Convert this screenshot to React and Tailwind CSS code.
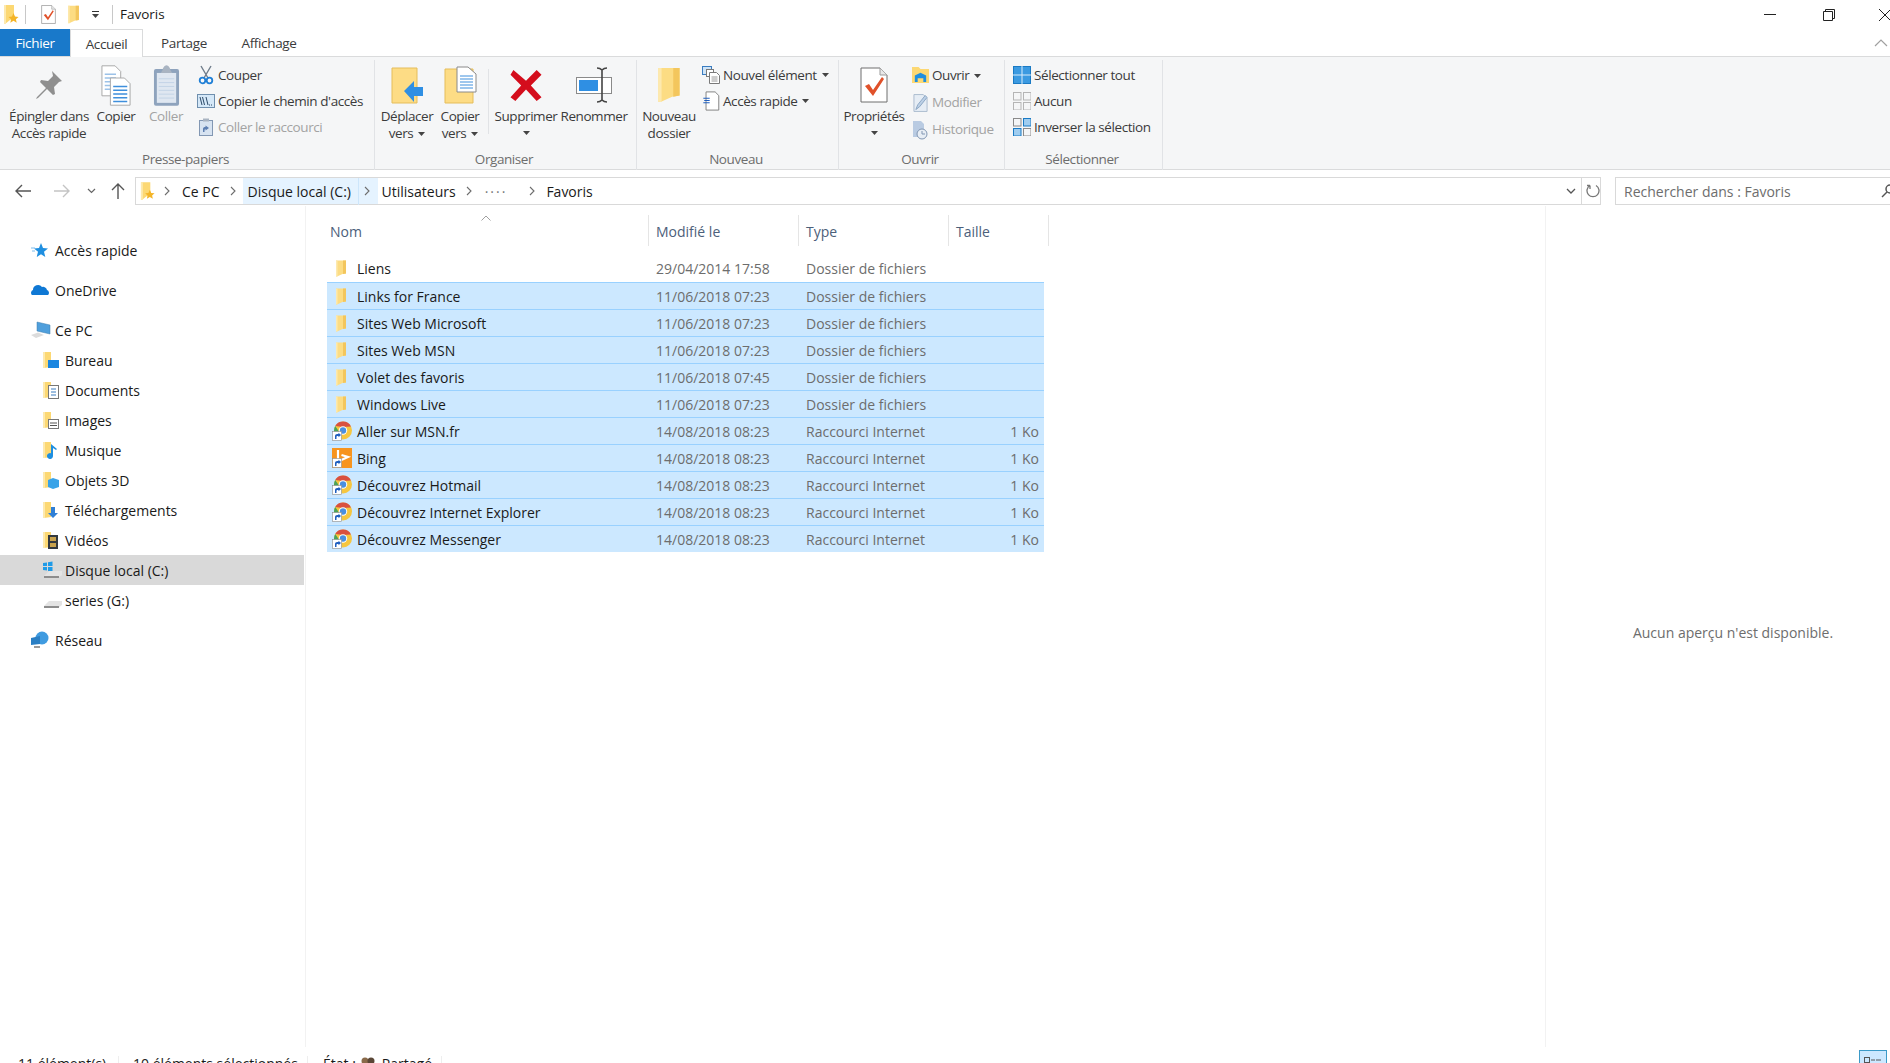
import React from 'react';

// --- icons ---
const Folder = ({ className = 'w-[12px] h-[17px]' }) => (
    <svg viewBox="0 0 24 34" className={className}>
        <path d="M2 1h20v26l-7 1-11 5H2z" fill="#fcdc83" />
        <path d="M16 1h6v26l-6 1z" fill="#f3c65d" />
        <path d="M2 1h3v32H3l-1-1z" fill="#fde9ae" />
    </svg>
);

const Shortcut = () => (
    <g>
        <rect x="0.5" y="10.5" width="9" height="9" fill="#fff" stroke="#8a8a8a" strokeWidth="0.6" />
        <path d="M3 18v-3c0-1.3 1-2 2.2-2H6.5V11.8L9 14l-2.500 2.200V15H5.500C4.800 15 4.500 15.500 4.500 16.200V18z" fill="#1f5fbf" />
    </g>
);

const ChromeLink = () => (
    <svg viewBox="0 0 20 20" className="w-[20px] h-[20px] shrink-0">
        <circle cx="11" cy="9.500" r="9" fill="#f6c63f" />
        <path d="M3.200 5A9 9 0 0 1 19 5.500L11 6z" fill="#d9503f" />
        <path d="M2 9.500A9 9 0 0 1 3.200 5L8 12l-1 6A9 9 0 0 1 2 9.500z" fill="#4aa35a" />
        <circle cx="11" cy="9.500" r="4.200" fill="#fff" />
        <circle cx="11" cy="9.500" r="3.200" fill="#4a8fe0" />
        <Shortcut />
    </svg>
);

const BingLink = () => (
    <svg viewBox="0 0 20 20" className="w-[20px] h-[20px] shrink-0">
        <rect x="0" y="0" width="20" height="20" fill="#f7941e" />
        <path d="M6 2v11.500l10-4.500-6.500-2" fill="none" stroke="#fff" strokeWidth="2.200" />
        <Shortcut />
    </svg>
);

const Caret = ({ className = '' }) => (
    <svg viewBox="0 0 7 4" className={`w-[7px] h-[4px] ${className}`}>
        <path d="M0 0h7L3.500 4z" fill="#444" />
    </svg>
);

const Chevron = ({ className = '' }) => (
    <svg viewBox="0 0 6 10" className={`w-[6px] h-[10px] shrink-0 ${className}`} fill="none" stroke="#6d6d6d" strokeWidth="1.100">
        <path d="M1 1l4 4-4 4" />
    </svg>
);

const StarFolder = ({ className }) => (
    <svg viewBox="0 0 16 20" className={className}>
        <path d="M1 0h10v14l-4 1-5 4H1z" fill="#fcd873" />
        <path d="M1 0h2v19H1z" fill="#fde9ae" />
        <path d="M10.500 8l1.500 3.500 3.500.4-2.600 2.300.8 3.500-3.200-1.900-3.200 1.900.8-3.500-2.600-2.300 3.500-.4z" fill="#f4b528" />
    </svg>
);

const PropsDoc = ({ className }) => (
    <svg viewBox="0 0 28 36" className={className}>
        <path d="M1 1h19l7 7v27H1z" fill="#fff" stroke="#6f6f6f" />
        <path d="M20 1v7h7" fill="#e8e8e8" stroke="#9a9a9a" />
        <path d="M5 19l4-2 4 6 9-13 2 2-11 17z" fill="#e0512a" />
    </svg>
);

const Pin = () => (
    <svg viewBox="0 0 28 30" className="w-[28px] h-[30px]">
        <path d="M17 1l10 10-3 1-5 5 1 7-2 1-6-6-9 9-2 1 1-2 9-9-6-6 1-2 7 1 5-5z" fill="#8f8f8f" />
    </svg>
);

const CopyDocs = () => (
    <svg viewBox="0 0 32 44" className="w-[30px] h-[43px]">
        <path d="M1 1h14l6 6v26H1z" fill="#fff" stroke="#a5a5a5" />
        <path d="M4 10h12M4 14h12M4 18h12M4 22h12M4 26h12" stroke="#9cc2e8" strokeWidth="1.500" />
        <path d="M10 14h15l6 6v23H10z" fill="#fff" stroke="#a5a5a5" />
        <path d="M13 23h15M13 27h15M13 31h15M13 35h15M13 39h15" stroke="#3f8fdc" strokeWidth="1.500" />
    </svg>
);

const Clipboard = () => (
    <svg viewBox="0 0 28 44" className="w-[27px] h-[43px]">
        <rect x="1" y="5" width="26" height="38" rx="2" fill="#8ea3bd" />
        <rect x="4" y="9" width="20" height="31" fill="#dfe7f1" />
        <path d="M6 15h16M6 19h16M6 23h16M6 27h16M6 31h16M6 35h16" stroke="#c3d3e6" />
        <path d="M10 6c0-2 2-5 4-5s4 3 4 5l2 3H8z" fill="#a9b4c2" />
    </svg>
);

const Scissors = () => (
    <svg viewBox="0 0 16 20" className="w-[16px] h-[20px]" fill="none">
        <path d="M3 1l7 12M13 1L6 13" stroke="#6f7c8a" strokeWidth="1.400" />
        <circle cx="4.500" cy="15.500" r="2.800" stroke="#1f7fd6" strokeWidth="1.800" />
        <circle cx="11.500" cy="15.500" r="2.800" stroke="#1f7fd6" strokeWidth="1.800" />
    </svg>
);

const PathIcon = () => (
    <svg viewBox="0 0 18 14" className="w-[18px] h-[14px]" fill="none">
        <rect x="0.500" y="0.500" width="17" height="13" fill="#d5e8f8" stroke="#6f8fae" />
        <path d="M3 3l2 8M5.500 3l2 8M9 3l2 8" stroke="#2c4a68" />
        <path d="M12 11h1M14 11h1" stroke="#2c4a68" />
    </svg>
);

const PasteLink = () => (
    <svg viewBox="0 0 14 18" className="w-[14px] h-[18px]">
        <rect x="0.500" y="2.500" width="13" height="15" fill="#d7e3f1" stroke="#8297b3" />
        <rect x="4" y="0.500" width="6" height="3" fill="#a9b4c2" />
        <path d="M4 14v-3c0-1.500 1-2 2.500-2V7.500L10 10l-3.500 2.500V11C5.500 11 5.500 12 5.500 14z" fill="#5d7fb2" />
    </svg>
);

const MoveFolder = () => (
    <svg viewBox="0 0 32 37" className="w-[32px] h-[37px]">
        <path d="M1 1h25v35H1z" fill="#fddc85" stroke="#e5bd5b" />
        <path d="M13 24l10-10v6h9v9h-9v6z" fill="#2f8fe3" />
    </svg>
);

const CopyFolder = () => (
    <svg viewBox="0 0 33 38" className="w-[33px] h-[38px]">
        <path d="M1 3h28v34H1z" fill="#fddc85" stroke="#e5bd5b" />
        <path d="M13 1h11l8 7v18H13z" fill="#fff" stroke="#8a8a8a" />
        <path d="M16 10h13M16 13h13M16 16h13M16 19h13M16 22h13" stroke="#3f8fdc" />
    </svg>
);

const DeleteX = () => (
    <svg viewBox="0 0 32 32" className="w-[32px] h-[31px]">
        <path d="M3 0l13 11L27 0l5 5-11 11 11 12-5 4-11-12L5 32l-5-4 11-12L0 5z" fill="#d40d1c" />
    </svg>
);

const RenameIcon = () => (
    <svg viewBox="0 0 37 36" className="w-[37px] h-[36px]" fill="none">
        <rect x="0.500" y="10.500" width="35" height="16" fill="#fff" stroke="#8a8a8a" />
        <rect x="3" y="13" width="19" height="11" fill="#2f8fe3" />
        <path d="M21 1c3 0 4 1 5 2 1-1 2-2 5-2M26 3v30M21 35c3 0 4-1 5-2 1 1 2 2 5 2" stroke="#444" strokeWidth="1.600" />
    </svg>
);

const NewItem = () => (
    <svg viewBox="0 0 18 18" className="w-[18px] h-[18px]">
        <rect x="0.500" y="0.500" width="9" height="8" fill="#cfe4f7" stroke="#3a7cc0" />
        <rect x="4.500" y="3.500" width="7" height="7" fill="#fff" stroke="#7a7a7a" />
        <path d="M7.500 6.500h7l3 3v8h-10z" fill="#fff" stroke="#7a7a7a" />
        <path d="M9.500 11h6M9.500 13h6M9.500 15h6" stroke="#9a9a9a" />
    </svg>
);

const QuickAccess = () => (
    <svg viewBox="0 0 18 22" className="w-[17px] h-[20px]">
        <path d="M3 1h10l4 4v16H3z" fill="#fff" stroke="#7a7a7a" />
        <path d="M0 8h7M1 10.500h6M0 13h7" stroke="#1f5fbf" strokeWidth="1.200" />
    </svg>
);

const OpenIcon = () => (
    <svg viewBox="0 0 18 20" className="w-[17px] h-[19px]">
        <path d="M0 1h7l2 2h9v15H0z" fill="#fcd873" />
        <path d="M3 17V10l6-3 6 3v7h-3v-4H6v4z" fill="#1f8fe0" />
    </svg>
);

const EditIcon = () => (
    <svg viewBox="0 0 16 20" className="w-[15px] h-[20px]" fill="none">
        <path d="M1 1h10l4 4v14H1z" fill="#e6edf5" stroke="#a9bacd" />
        <path d="M3 17l2-5 8-10 2 2-8 10z" fill="#bcd0e6" stroke="#8aa4c2" />
    </svg>
);

const HistoryIcon = () => (
    <svg viewBox="0 0 16 20" className="w-[16px] h-[20px]" fill="none">
        <path d="M1 1h8l3 3v13H1z" fill="#b9cbe2" />
        <circle cx="10" cy="14" r="5" fill="#e8eef5" stroke="#8297b3" />
        <path d="M10 11v3h3" stroke="#8297b3" />
    </svg>
);

const Grid4 = ({ cells, border }) => (
    <svg viewBox="0 0 18 18" className="w-[18px] h-[18px]">
        {[[0, 0], [10, 0], [0, 10], [10, 10]].map(([x, y], i) => (
            <rect key={i} x={x + 0.5} y={y + 0.5} width="7.500" height="7.500" fill={cells[i]} stroke={border[i]} />
        ))}
    </svg>
);

const SelectAll = () => (
    <svg viewBox="0 0 18 18" className="w-[18px] h-[18px]">
        <rect x="0.500" y="0.500" width="17" height="17" fill="#3b9ae1" stroke="#1a7ac4" />
        <path d="M9 0v18M0 9h18" stroke="#d8ecfb" />
    </svg>
);

const PcIcon = () => (
    <svg viewBox="0 0 20 18" className="w-[20px] h-[18px]">
        <path d="M6 1l13 3v9L6 10z" fill="#4f9fdc" stroke="#3f7faf" strokeWidth="0.500" />
        <path d="M0 14l7-2.500 6 2.500-8 3z" fill="#dcdcdc" />
    </svg>
);

const LibFolder = ({ children }) => (
    <svg viewBox="0 0 16 17" className="w-[16px] h-[17px]">
        <path d="M0 0h8v15l-7 1H0z" fill="#fcd873" />
        <path d="M0 0h2v16H0z" fill="#fde9ae" />
        {children}
    </svg>
);

const DriveIcon = ({ windows }) => (
    <svg viewBox="0 0 20 18" className="w-[20px] h-[18px]">
        {windows && <path d="M0 2l4-.6V5H0zM5 1.300L9.500.500V5H5zM0 6h4v3.500L0 9zM5 6h4.500v4.500L5 10z" fill="#1f9be8" />}
        <path d="M1 15l5-5h13v4l-4 3H2z" fill="#e4e4e4" />
        <path d="M1 15h15v2H1z" fill="#8d8d8d" />
    </svg>
);

const BackArrow = ({ color, flip }) => (
    <svg viewBox="0 0 16 14" className={`w-[16px] h-[14px] ${flip ? 'rotate-180' : ''}`} fill="none" stroke={color} strokeWidth="1.400">
        <path d="M1 7h15M7 1L1 7l6 6" />
    </svg>
);

// --- ribbon parts ---
const LargeBtn = ({ w, icon, lines, disabled, caret, lineCaret }) => (
    <div className={`${w} flex flex-col items-center text-center ${disabled ? 'text-[#a3a3a3]' : 'text-[#3b3b3b]'}`}>
        <div className="h-[46px] mt-[2px] flex items-center justify-center">{icon}</div>
        <div className="leading-[17px] whitespace-nowrap">{lines[0]}</div>
        {lines[1] && (
            <div className="leading-[17px] whitespace-nowrap flex items-center gap-[5px]">
                {lines[1]}
                {lineCaret && <Caret />}
            </div>
        )}
        {caret && <Caret className="mt-[6px]" />}
    </div>
);

const SmallBtn = ({ icon, label, disabled, caret, h = 'h-[26px]' }) => (
    <div className={`${h} flex items-center gap-[3px] whitespace-nowrap ${disabled ? 'text-[#a3a3a3]' : 'text-[#3b3b3b]'}`}>
        <div className="w-[18px] flex items-center justify-center shrink-0">{icon}</div>
        {label}
        {caret && <Caret className="ml-[2px]" />}
    </div>
);

const Group = ({ w, label, children }) => (
    <div className={`${w} shrink-0 h-[110px] mt-[3px] border-r border-[#e1e3e6] flex flex-col`}>
        <div className="flex-1 flex">{children}</div>
        <div className="text-center text-[#6d6d6d] leading-[18px] mb-[2px] pr-[3px]">{label}</div>
    </div>
);

// --- data ---
const files = [
    { name: 'Liens', date: '29/04/2014 17:58', type: 'Dossier de fichiers', icon: 'folder' },
    { name: 'Links for France', date: '11/06/2018 07:23', type: 'Dossier de fichiers', icon: 'folder', sel: true },
    { name: 'Sites Web Microsoft', date: '11/06/2018 07:23', type: 'Dossier de fichiers', icon: 'folder', sel: true },
    { name: 'Sites Web MSN', date: '11/06/2018 07:23', type: 'Dossier de fichiers', icon: 'folder', sel: true },
    { name: 'Volet des favoris', date: '11/06/2018 07:45', type: 'Dossier de fichiers', icon: 'folder', sel: true },
    { name: 'Windows Live', date: '11/06/2018 07:23', type: 'Dossier de fichiers', icon: 'folder', sel: true },
    { name: 'Aller sur MSN.fr', date: '14/08/2018 08:23', type: 'Raccourci Internet', size: '1 Ko', icon: 'link', sel: true },
    { name: 'Bing', date: '14/08/2018 08:23', type: 'Raccourci Internet', size: '1 Ko', icon: 'bing', sel: true },
    { name: 'Découvrez Hotmail', date: '14/08/2018 08:23', type: 'Raccourci Internet', size: '1 Ko', icon: 'link', sel: true },
    { name: 'Découvrez Internet Explorer', date: '14/08/2018 08:23', type: 'Raccourci Internet', size: '1 Ko', icon: 'link', sel: true },
    { name: 'Découvrez Messenger', date: '14/08/2018 08:23', type: 'Raccourci Internet', size: '1 Ko', icon: 'link', sel: true },
];

const libraries = [
    { label: 'Bureau', badge: <rect x="5" y="8" width="11" height="8" fill="#1a86e0" /> },
    { label: 'Documents', badge: <g><rect x="5.500" y="3.500" width="10" height="13" fill="#fff" stroke="#777" /><path d="M8 7h5M8 10h5M8 13h5" stroke="#3a7cc0" /></g> },
    { label: 'Images', badge: <g><rect x="5.500" y="7.500" width="10" height="9" fill="#fff" stroke="#777" /><path d="M7 11h7M7 13.500h7" stroke="#555" /></g> },
    { label: 'Musique', badge: <path d="M8 2l6 5-1 1-3-2v8a3 3 0 1 1-2-2.800z" fill="#1f8fe0" /> },
    { label: 'Objets 3D', badge: <path d="M5 8l5-2 6 2v7l-6 2-5-2z" fill="#38a3e8" /> },
    { label: 'Téléchargements', badge: <path d="M8 5h4v6h3l-5 5-5-5h3z" fill="#2f7fd6" /> },
    { label: 'Vidéos', badge: <g><rect x="5" y="3" width="10" height="14" fill="#33393f" /><path d="M7 5h6v4H7zM7 11h6v4H7z" fill="#c8a24d" /></g> },
];

const NavRow = ({ icon, label, child, active }) => (
    <div className={`h-[30px] w-[304px] flex items-center whitespace-nowrap text-[#1a1a1a] ${active ? 'bg-[#d9d9d9]' : ''} ${child ? 'pl-[43px]' : 'pl-[31px]'}`}>
        <div className={`${child ? 'w-[22px]' : 'w-[24px]'} flex items-center shrink-0`}>{icon}</div>
        {label}
    </div>
);

const App = () => {
    return (
        <div className="h-screen w-full overflow-hidden bg-white">
            <div className="w-[1920px] h-[1080px] flex flex-col font-['Open_Sans',sans-serif] text-[14px]">
                {/* title bar */}
                <div className="h-[29px] shrink-0 flex items-center">
                    <div className="w-[26px] pl-[3px] flex items-center border-r border-[#c8c8c8] h-[19px]">
                        <StarFolder className="w-[16px] h-[20px]" />
                    </div>
                    <div className="ml-[15px] flex items-center">
                        <PropsDoc className="w-[15px] h-[19px]" />
                        <Folder className="w-[13px] h-[19px] ml-[11px]" />
                        <div className="ml-[12px] flex flex-col items-center gap-[2px]">
                            <div className="w-[7px] h-px bg-[#333]" />
                            <Caret />
                        </div>
                    </div>
                    <div className="ml-[13px] h-[19px] border-l border-[#c8c8c8] pl-[7px] leading-[19px] text-[13.5px] text-[#1a1a1a]">Favoris</div>
                    <div className="flex-1" />
                    <div className="w-[12px] h-px bg-[#222] mr-[47px]" />
                    <svg viewBox="0 0 12 12" className="w-[12px] h-[12px] mr-[44px]" fill="none" stroke="#222">
                        <path d="M.5 2.500h9v9h-9zM2.500 2.500v-2h9v9h-2" />
                    </svg>
                    <svg viewBox="0 0 12 12" className="w-[12px] h-[12px] mr-[29px]" fill="none" stroke="#222">
                        <path d="M0 0l12 12M12 0L0 12" />
                    </svg>
                </div>

                {/* tabs */}
                <div className="h-[28px] shrink-0 flex items-stretch border-b border-[#dadbdc] text-[13.5px] tracking-[-0.35px]">
                    <div className="w-[70px] bg-[#1979ca] text-white flex items-center justify-center pt-[2px]">Fichier</div>
                    <div className="w-[73px] bg-white border-x border-t border-[#dadbdc] -mb-px flex items-center justify-center pt-[1px] text-[#3b3b3b]">Accueil</div>
                    <div className="w-[82px] flex items-center justify-center pt-[2px] text-[#3b3b3b]">Partage</div>
                    <div className="w-[86px] flex items-center justify-center pt-[2px] pl-[2px] text-[#3b3b3b]">Affichage</div>
                    <div className="flex-1" />
                    <svg viewBox="0 0 14 8" className="w-[14px] h-[8px] self-center mr-[32px]" fill="none" stroke="#a0a0a0" strokeWidth="1.200">
                        <path d="M1 7l6-6 6 6" />
                    </svg>
                </div>

                {/* ribbon */}
                <div className="h-[113px] shrink-0 bg-[#f5f6f7] border-b border-[#dadbdc] flex text-[13.5px] tracking-[-0.42px]">
                    <Group w="w-[375px]" label="Presse-papiers">
                        <div className="w-[4px]" />
                        <LargeBtn w="w-[90px]" icon={<Pin />} lines={['Épingler dans', 'Accès rapide']} />
                        <LargeBtn w="w-[44px]" icon={<CopyDocs />} lines={['Copier']} />
                        <LargeBtn w="w-[56px]" icon={<Clipboard />} lines={['Coller']} disabled />
                        <div className="pl-[3px] pt-[2px]">
                            <SmallBtn icon={<Scissors />} label="Couper" />
                            <SmallBtn icon={<PathIcon />} label="Copier le chemin d'accès" />
                            <SmallBtn icon={<PasteLink />} label="Coller le raccourci" disabled />
                        </div>
                    </Group>
                    <Group w="w-[262px]" label="Organiser">
                        <div className="w-[4px]" />
                        <LargeBtn w="w-[56px]" icon={<MoveFolder />} lines={['Déplacer', 'vers']} lineCaret />
                        <LargeBtn w="w-[50px]" icon={<CopyFolder />} lines={['Copier', 'vers']} lineCaret />
                        <div className="w-px h-[65px] mt-[9px] bg-[#e1e3e6] mx-[3px]" />
                        <LargeBtn w="w-[68px]" icon={<DeleteX />} lines={['Supprimer']} caret />
                        <LargeBtn w="w-[68px]" icon={<RenameIcon />} lines={['Renommer']} />
                    </Group>
                    <Group w="w-[202px]" label="Nouveau">
                        <div className="w-[2px]" />
                        <LargeBtn w="w-[60px]" icon={<Folder className="w-[26px] h-[36px]" />} lines={['Nouveau', 'dossier']} />
                        <div className="pl-[3px] pt-[2px]">
                            <SmallBtn icon={<NewItem />} label="Nouvel élément" caret />
                            <SmallBtn icon={<QuickAccess />} label="Accès rapide" caret />
                        </div>
                    </Group>
                    <Group w="w-[166px]" label="Ouvrir">
                        <div className="w-[3px]" />
                        <LargeBtn w="w-[64px]" icon={<PropsDoc className="w-[28px] h-[36px]" />} lines={['Propriétés']} caret />
                        <div className="pl-[5px] pt-[2px]">
                            <SmallBtn h="h-[27px]" icon={<OpenIcon />} label="Ouvrir" caret />
                            <SmallBtn h="h-[27px]" icon={<EditIcon />} label="Modifier" disabled />
                            <SmallBtn h="h-[27px]" icon={<HistoryIcon />} label="Historique" disabled />
                        </div>
                    </Group>
                    <Group w="w-[158px]" label="Sélectionner">
                        <div className="pl-[8px] pt-[2px]">
                            <SmallBtn icon={<SelectAll />} label="Sélectionner tout" />
                            <SmallBtn icon={<Grid4 cells={['#f5f6f7', '#f5f6f7', '#f5f6f7', '#f5f6f7']} border={['#b5b5b5', '#b5b5b5', '#b5b5b5', '#b5b5b5']} />} label="Aucun" />
                            <SmallBtn icon={<Grid4 cells={['#f5f6f7', '#9fcdf0', '#9fcdf0', '#f5f6f7']} border={['#8a8a8a', '#1a7ac4', '#1a7ac4', '#8a8a8a']} />} label="Inverser la sélection" />
                        </div>
                    </Group>
                </div>

                {/* address bar */}
                <div className="h-[28px] shrink-0 mt-[7px] flex items-center">
                    <div className="w-[135px] shrink-0 flex items-center pl-[15px]">
                        <BackArrow color="#555" />
                        <div className="ml-[23px]"><BackArrow color="#c4c4c4" flip /></div>
                        <svg viewBox="0 0 9 6" className="w-[9px] h-[6px] ml-[17px]" fill="none" stroke="#666" strokeWidth="1.200"><path d="M1 1l3.500 3.500L8 1" /></svg>
                        <svg viewBox="0 0 14 16" className="w-[14px] h-[16px] ml-[15px]" fill="none" stroke="#555" strokeWidth="1.400"><path d="M7 16V1M1 7l6-6 6 6" /></svg>
                    </div>
                    <div className="w-[1466px] h-full shrink-0 border border-[#d9d9d9] flex items-center text-[#1a1a1a]">
                        <div className="ml-[4px] flex items-center"><StarFolder className="w-[15px] h-[19px]" /></div>
                        <Chevron className="ml-[9px]" />
                        <span className="ml-[12px] pt-px">Ce PC</span>
                        <Chevron className="ml-[10px]" />
                        <div className="ml-[7px] h-full bg-[#e5f3ff] flex items-center w-[135px] pl-[5px] shrink-0">
                            <span className="w-[111px] border-r border-[#cde6fb] leading-[26px] shrink-0 pt-px">Disque local (C:)</span>
                            <Chevron className="ml-[5px]" />
                        </div>
                        <span className="ml-[4px] pt-px">Utilisateurs</span>
                        <Chevron className="ml-[10px]" />
                        <span className="ml-[13px] text-[#777] tracking-[2px]">····</span>
                        <Chevron className="ml-[22px]" />
                        <span className="ml-[11px] pt-px">Favoris</span>
                        <div className="flex-1" />
                        <svg viewBox="0 0 10 6" className="w-[10px] h-[6px] mr-[5px]" fill="none" stroke="#555" strokeWidth="1.300"><path d="M1 1l4 4 4-4" /></svg>
                        <div className="w-px h-full bg-[#d9d9d9]" />
                        <svg viewBox="0 0 14 14" className="w-[14px] h-[14px] ml-[4px]" fill="none" stroke="#777" strokeWidth="1.300"><path d="M4 1.500A6 6 0 1 0 10 1.500M4 1.500V5M4 1.500H1" /></svg>
                    </div>
                    <div className="ml-[14px] flex-1 h-full border border-[#d9d9d9] flex items-center pl-[8px] text-[#6d6d6d]">
                        <span className="pt-px">Rechercher dans : Favoris</span>
                        <div className="flex-1" />
                        <svg viewBox="0 0 14 14" className="w-[14px] h-[14px] mr-[24px]" fill="none" stroke="#555" strokeWidth="1.500"><circle cx="9" cy="5" r="4" /><path d="M6 8l-5 5" /></svg>
                    </div>
                </div>

                {/* main */}
                <div className="flex-1 flex min-h-0 mt-px">
                    <div className="w-[306px] shrink-0 border-r border-[#f2f2f2] pt-[29px]">
                        <NavRow label="Accès rapide" icon={
                            <svg viewBox="0 0 17 15" className="w-[17px] h-[15px]"><path d="M10 0l2 5 5 .4-4 3.400 1.300 5.200L10 11.300 5.700 14 7 8.800 3 5.400 8 5z" fill="#1f8fe0" /><path d="M0 5h4M1 8h3" stroke="#7dbcec" /></svg>
                        } />
                        <div className="h-[10px]" />
                        <NavRow label="OneDrive" icon={
                            <svg viewBox="0 0 18 12" className="w-[18px] h-[12px]"><path d="M1 11a3 3 0 0 1 1-5 5 5 0 0 1 9-3 4 4 0 0 1 5 3 3 3 0 0 1 1 5z" fill="#0f78d4" /></svg>
                        } />
                        <div className="h-[10px]" />
                        <NavRow label="Ce PC" icon={<PcIcon />} />
                        {libraries.map((l) => (
                            <NavRow key={l.label} child label={l.label} icon={<LibFolder>{l.badge}</LibFolder>} />
                        ))}
                        <NavRow child active label="Disque local (C:)" icon={<DriveIcon windows />} />
                        <NavRow child label="series (G:)" icon={<DriveIcon />} />
                        <div className="h-[10px]" />
                        <NavRow label="Réseau" icon={
                            <svg viewBox="0 0 18 18" className="w-[18px] h-[18px]"><circle cx="11" cy="7" r="6.500" fill="#3f9be0" /><path d="M0 7l9-2v8l-9 1z" fill="#2a7fc4" /><path d="M3 15h6v2H3z" fill="#9a9a9a" /></svg>
                        } />
                    </div>

                    <div className="w-[1239px] shrink-0 pl-[21px] pt-[9px]">
                        <div className="h-[31px] flex text-[#4c607a] relative">
                            <div className="w-[322px] border-r border-[#e5e5e5] pl-[3px] pt-px flex items-center">Nom</div>
                            <div className="w-[150px] border-r border-[#e5e5e5] pl-[7px] pt-px flex items-center">Modifié le</div>
                            <div className="w-[150px] border-r border-[#e5e5e5] pl-[7px] pt-px flex items-center">Type</div>
                            <div className="w-[100px] border-r border-[#e5e5e5] pl-[7px] pt-px flex items-center">Taille</div>
                            <svg viewBox="0 0 10 6" className="w-[10px] h-[6px] absolute left-[154px] top-0" fill="none" stroke="#a0a0a0"><path d="M.5 5.500L5 1l4.500 4.500" /></svg>
                        </div>
                        <div className="mt-[9px] w-[717px]">
                            {files.map((f) => (
                                <div key={f.name} className={`h-[27px] flex items-center ${f.sel ? 'bg-[#cce8ff] border-t border-[#99d1ff]' : ''}`}>
                                    <div className="w-[329px] shrink-0 flex items-center">
                                        <div className="w-[30px] pl-[5px] flex items-center shrink-0">
                                            {f.icon === 'folder' && <div className="pl-[3px]"><Folder /></div>}
                                            {f.icon === 'link' && <ChromeLink />}
                                            {f.icon === 'bing' && <BingLink />}
                                        </div>
                                        <span className="text-[#1a1a1a]">{f.name}</span>
                                    </div>
                                    <div className="w-[150px] shrink-0 text-[#6d6d6d]">{f.date}</div>
                                    <div className="flex-1 text-[#6d6d6d]">{f.type}</div>
                                    <div className="pr-[5px] text-[#6d6d6d]">{f.size}</div>
                                </div>
                            ))}
                        </div>
                    </div>

                    <div className="flex-1 border-l border-[#f2f2f2] flex justify-center pt-[416px] text-[#6d6d6d]">
                        Aucun aperçu n'est disponible.
                    </div>
                </div>

                {/* status bar */}
                <div className="h-[33px] shrink-0 flex items-center text-[#1a1a1a] relative">
                    <span className="ml-[18px] w-[101px] h-[16px] leading-[16px] border-r border-[#eeeeee]">11 élément(s)</span>
                    <span className="ml-[14px] w-[175px] h-[16px] leading-[16px] border-r border-[#eeeeee] whitespace-nowrap">10 éléments sélectionnés</span>
                    <span className="ml-[15px]">État :</span>
                    <svg viewBox="0 0 16 14" className="w-[16px] h-[14px] ml-[4px]">
                        <circle cx="5" cy="4" r="3.500" fill="#8a6a4a" /><circle cx="11" cy="4" r="3.500" fill="#5a4636" />
                        <path d="M0 14c0-4 2-6 5-6s5 2 5 6zM8 14c0-4 1-6 3-6s5 2 5 6z" fill="#556" />
                    </svg>
                    <span className="ml-[6px] w-[60px] h-[16px] leading-[16px] border-r border-[#eeeeee]">Partagé</span>
                    <div className="absolute left-[1859px] top-[3px] w-[28px] h-[24px] bg-[#cce8ff] border border-[#3b9ac8] flex justify-center pt-[6px]">
                        <svg viewBox="0 0 18 6" className="w-[18px] h-[6px]" fill="none" stroke="#555"><rect x="0.500" y="0.500" width="5" height="5" /><path d="M7 3h4M12 3h5" /></svg>
                    </div>
                </div>
            </div>
        </div>
    );
};

export default App;
